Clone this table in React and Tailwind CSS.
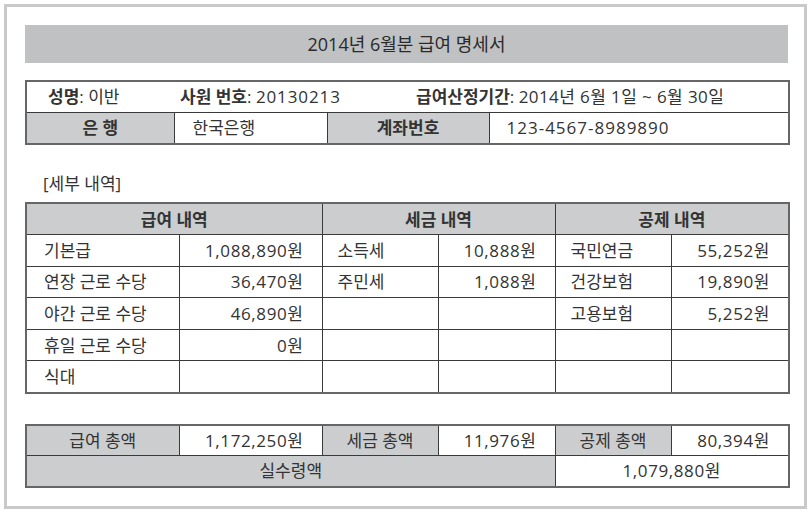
// App.jsx — 급여 명세서

const font = { fontFamily: '"Open Sans", "Noto Sans CJK KR", "Noto Sans", sans-serif' };

const earnings = [
  ['기본급', '1,088,890원'],
  ['연장 근로 수당', '36,470원'],
  ['야간 근로 수당', '46,890원'],
  ['휴일 근로 수당', '0원'],
  ['식대', ''],
];
const taxes = [
  ['소득세', '10,888원'],
  ['주민세', '1,088원'],
];
const deductions = [
  ['국민연금', '55,252원'],
  ['건강보험', '19,890원'],
  ['고용보험', '5,252원'],
];

const cell = 'border border-[#3a3a3a] h-[31px] p-0';
const row = 'border border-[#3a3a3a] h-[31.6px] p-0';
const gray = 'bg-[#cbcdcf]';
const num = 'pr-[18px] text-right tracking-[0.6px]';

function Cols() {
  return (
    <colgroup>
      <col className="w-[153px]" />
      <col className="w-[143px]" />
      <col className="w-[116px]" />
      <col className="w-[117px]" />
      <col className="w-[116px]" />
      <col className="w-[118px]" />
    </colgroup>
  );
}

export default function App() {
  return (
    <div className="w-[812px] h-[514px] bg-white text-[#333] text-[17px] leading-none" style={font}>
      <div className="ml-[4px] mt-[4px] w-[803px] h-[505px] border-[3px] border-[#c9c9c9] pl-[18px] pt-[18px]">
        <div className="w-[763px]">
          <div className="h-[38px] bg-[#c0c1c3] flex items-center justify-center text-[18px] text-[#2a2a2a]">
            2014년 6월분 급여 명세서
          </div>

          {/* 인적 사항 */}
          <table className="mt-[17px] w-[763px] table-fixed border-collapse border-2 border-[#666]">
            <colgroup>
              <col className="w-[148px]" />
              <col className="w-[153px]" />
              <col className="w-[162px]" />
              <col className="w-[300px]" />
            </colgroup>
            <tbody>
              <tr>
                <td colSpan={4} className={`${cell} h-[31px]`}>
                  <div className="flex items-center">
                    <span className="ml-[21px] w-[132px]"><b className="font-semibold">성명</b>: 이반</span>
                    <span className="w-[236px]">
                      <b className="font-semibold">사원 번호</b>: <span className="tracking-[0.9px]">20130213</span>
                    </span>
                    <span>
                      <b className="font-semibold">급여산정기간</b>:{' '}
                      <span className="tracking-[0.4px]">2014년 6월 1일 ~ 6월 30일</span>
                    </span>
                  </div>
                </td>
              </tr>
              <tr>
                <td className={`${cell} ${gray} h-[32px] text-center font-semibold`}>은 행</td>
                <td className={`${cell} pl-[18px]`}>한국은행</td>
                <td className={`${cell} ${gray} text-center font-semibold`}>계좌번호</td>
                <td className={`${cell} pl-[17px] tracking-[1px]`}>123-4567-8989890</td>
              </tr>
            </tbody>
          </table>

          <div className="mt-[29px] ml-[18px] h-[20px] leading-[20px]">[세부 내역]</div>

          {/* 세부 내역 */}
          <table className="mt-[8px] w-[763px] table-fixed border-collapse border-2 border-[#666]">
            <Cols />
            <thead>
              <tr>
                <th colSpan={2} className={`${row} ${gray} font-semibold`}>급여 내역</th>
                <th colSpan={2} className={`${row} ${gray} font-semibold`}>세금 내역</th>
                <th colSpan={2} className={`${row} ${gray} font-semibold`}>공제 내역</th>
              </tr>
            </thead>
            <tbody>
              {earnings.map((e, i) => {
                const t = taxes[i] || ['', ''];
                const d = deductions[i] || ['', ''];
                return (
                  <tr key={i}>
                    <td className={`${row} pl-[17px]`}>{e[0]}</td>
                    <td className={`${row} ${num}`}>{e[1]}</td>
                    <td className={`${row} pl-[15px]`}>{t[0]}</td>
                    <td className={`${row} ${num}`}>{t[1]}</td>
                    <td className={`${row} pl-[15px]`}>{d[0]}</td>
                    <td className={`${row} ${num}`}>{d[1]}</td>
                  </tr>
                );
              })}
            </tbody>
          </table>

          {/* 합계 */}
          <table className="mt-[30px] w-[763px] table-fixed border-collapse border-2 border-[#666]">
            <Cols />
            <tbody>
              <tr>
                <td className={`${cell} ${gray} text-center`}>급여 총액</td>
                <td className={`${cell} ${num}`}>1,172,250원</td>
                <td className={`${cell} ${gray} text-center`}>세금 총액</td>
                <td className={`${cell} ${num}`}>11,976원</td>
                <td className={`${cell} ${gray} text-center`}>공제 총액</td>
                <td className={`${cell} ${num}`}>80,394원</td>
              </tr>
              <tr>
                <td colSpan={4} className={`${cell} ${gray} text-center`}>실수령액</td>
                <td colSpan={2} className={`${cell} text-center tracking-[0.6px]`}>1,079,880원</td>
              </tr>
            </tbody>
          </table>
        </div>
      </div>
    </div>
  );
}
